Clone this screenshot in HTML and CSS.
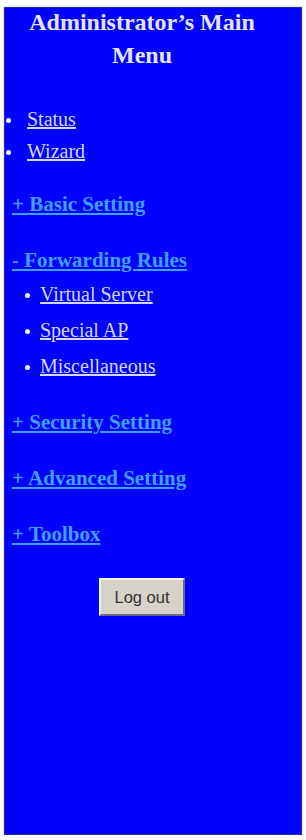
FILE: index.html
```html
<!DOCTYPE html>
<html lang="en">
<head>
  <meta charset="UTF-8" />
  <meta name="viewport" content="width=device-width, initial-scale=1.0" />
  <title>Administrator's Main Menu</title>
  <link rel="stylesheet" href="styles.css">
</head>
<body>
  <div class="menu-panel">
    <h1 class="menu-title">Administrator’s Main<br>Menu</h1>

    <ul class="top-links">
      <li><a href="#">Status</a></li>
      <li><a href="#">Wizard</a></li>
    </ul>

    <div class="group first">
      <a class="group-link" href="#">+ Basic Setting</a>
    </div>

    <div class="group">
      <a class="group-link" href="#">- Forwarding Rules</a>
      <ul class="sub-links">
        <li><a href="#">Virtual Server</a></li>
        <li><a href="#">Special AP</a></li>
        <li><a href="#">Miscellaneous</a></li>
      </ul>
    </div>

    <div class="group">
      <a class="group-link" href="#">+ Security Setting</a>
    </div>

    <div class="group">
      <a class="group-link" href="#">+ Advanced Setting</a>
    </div>

    <div class="group">
      <a class="group-link" href="#">+ Toolbox</a>
    </div>

    <div class="logout-row">
      <button class="logout-btn">Log out</button>
    </div>
  </div>
</body>
</html>
```

FILE: styles.css
```css
body {
  background-color: #fff;
  margin: 0;
  font-family: "Liberation Serif", "Times New Roman", serif;
}
.menu-panel {
  box-sizing: border-box;
  width: 298px;
  height: 828px;
  margin: 7px 0 0 4px;
  padding: 0 22px 0 0;
  background: #0000ff;
  border: 1px solid #2a2ab0;
  box-shadow: 0 0 2px #b8b8ff;
}
.menu-title {
  margin: -2px 0 0;
  font-size: 24px;
  line-height: 33px;
  font-weight: bold;
  text-align: center;
  color: #e4e4ff;
}
.top-links, .sub-links {
  list-style: none;
  margin: 0;
  padding: 0;
}
.top-links {
  margin-top: 31px;
}
.top-links li, .sub-links li {
  display: flex;
  align-items: center;
  font-size: 20px;
}
.top-links li {
  line-height: 32px;
}
.sub-links li {
  line-height: 36px;
}
.top-links li::before, .sub-links li::before {
  content: "";
  width: 5px;
  height: 5px;
  border-radius: 50%;
  background: #f0f0ff;
}
.top-links li::before {
  margin: 2px 16px 0 1px;
}
.sub-links li::before {
  margin: 2px 10px 0 20px;
}
.top-links a, .sub-links a {
  color: #d4d4ec;
}
.group {
  margin-top: 32px;
}
.group.first {
  margin-top: 25px;
}
.group-link {
  display: block;
  margin-left: 7px;
  font-size: 21px;
  line-height: 24px;
  font-weight: bold;
  color: #40a0ff;
}
.sub-links {
  margin: 4px 0 -6px;
}
.logout-row {
  margin-top: 32px;
  text-align: center;
}
.logout-btn {
  width: 86px;
  height: 38px;
  padding: 0;
  font-family: "Liberation Sans", Arial, sans-serif;
  font-size: 16.5px;
  color: #333;
  background: #d6d2ca;
  border: 2px solid;
  border-color: #f4f2ee #6a6a80 #6a6a80 #f4f2ee;
}
```
